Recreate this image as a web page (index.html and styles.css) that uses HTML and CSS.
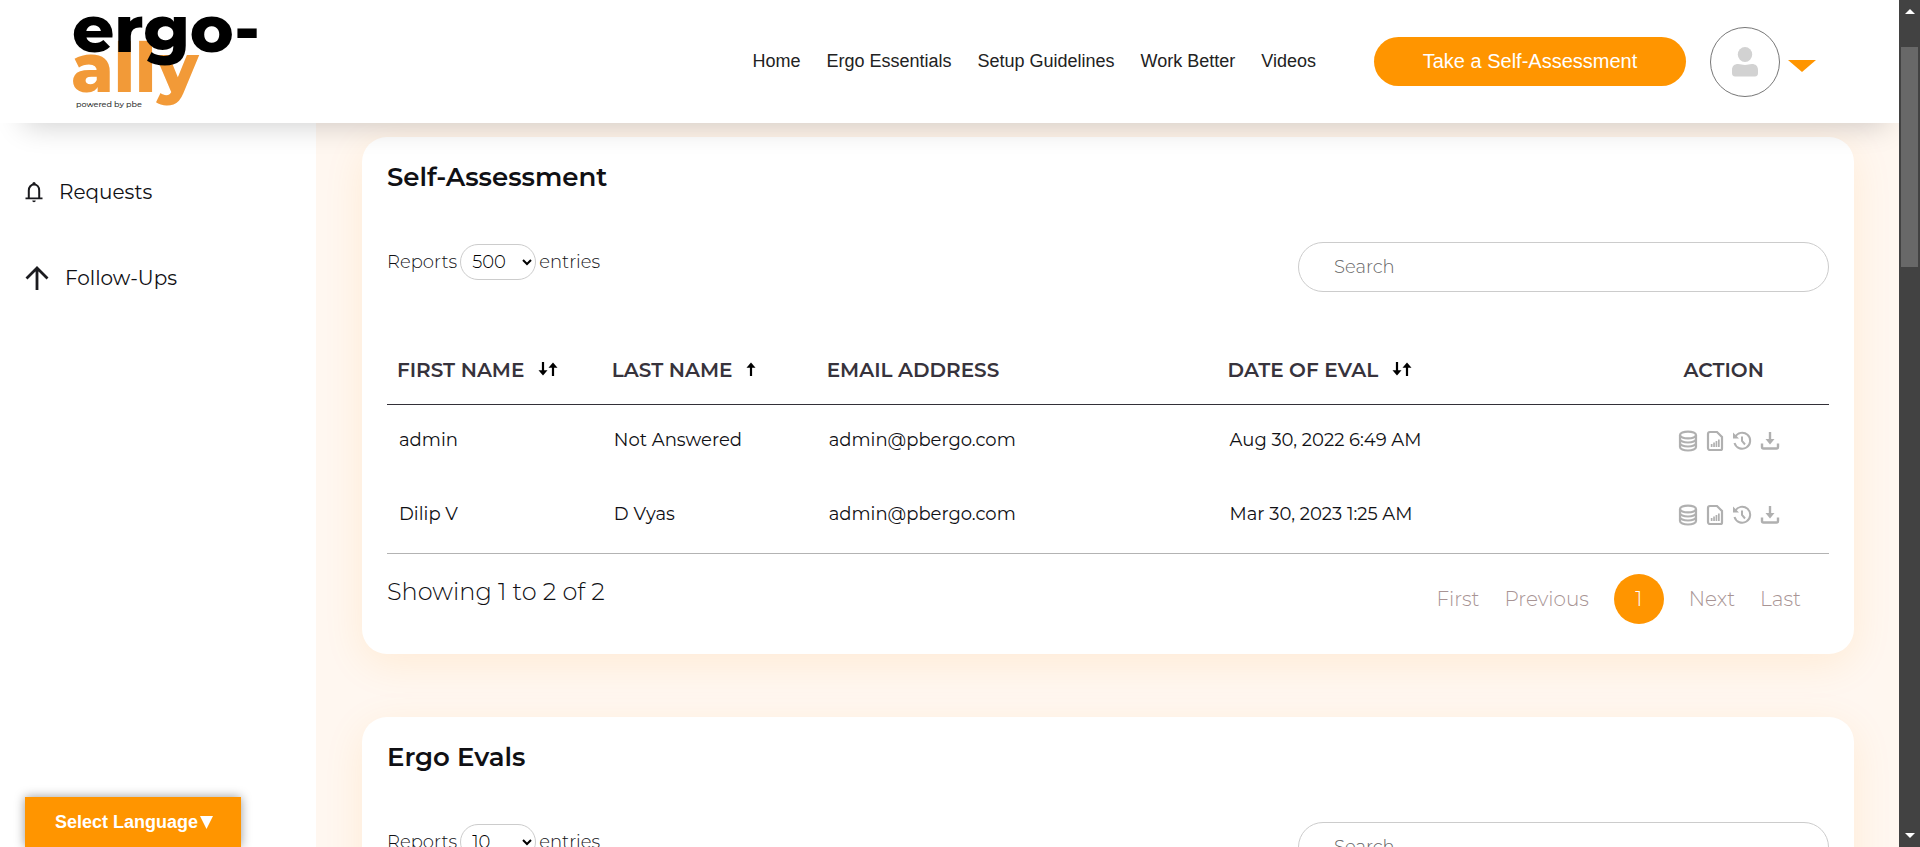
FILE: index.html
```html
<!DOCTYPE html>
<html lang="en">
<head>
<meta charset="utf-8">
<title>ergo-ally</title>
<link rel="stylesheet" href="styles.css">
</head>
<body>
<svg class="sprite" aria-hidden="true">
  <symbol id="sort" viewBox="0 0 20 16"><path d="M5 1v9M15 15V6" fill="none" stroke="#000" stroke-width="2.2"/><path d="M0.5 9.2h9L5 14.6zM10.500 6.800h9L15 1.400z" fill="#000"/></symbol>
  <symbol id="up" viewBox="0 0 10 16"><path d="M5 15V6" fill="none" stroke="#000" stroke-width="2.2"/><path d="M.5 6.800h9L5 1.400z" fill="#000"/></symbol>
  <symbol id="database" viewBox="0 0 20 22"><g fill="none" stroke="currentColor" stroke-width="2.200"><ellipse cx="10" cy="5" rx="8" ry="3.400"/><path d="M2 5v12c0 2 3.500 3.500 8 3.500s8-1.500 8-3.500V5M2 9c0 2 3.500 3.500 8 3.500S18 11 18 9M2 13c0 2 3.500 3.500 8 3.500s8-1.500 8-3.500"/></g></symbol>
  <symbol id="report" viewBox="0 0 18 22"><path d="M4 2h7l5 5v11.500a1.500 1.500 0 0 1-1.500 1.500H4a2 2 0 0 1-2-2V4a2 2 0 0 1 2-2z" fill="none" stroke="currentColor" stroke-width="2.200"/><path d="M4.800 17v-3h1.700v3zM7.200 17v-4.500h1.700V17zM9.600 17v-6h1.700v6zM12 17V9.500h1.700V17z" fill="currentColor"/></symbol>
  <symbol id="history" viewBox="0 0 20 20"><path d="M3 6.200A8 8 0 1 1 2.500 12" fill="none" stroke="currentColor" stroke-width="2"/><path d="M1 1.500v6h6z" fill="currentColor"/><path d="M10 5.500V10l3 3.500" fill="none" stroke="currentColor" stroke-width="2"/></symbol>
  <symbol id="download" viewBox="0 0 20 20"><path d="M10 1v9" stroke="currentColor" stroke-width="2.400"/><path d="M5.500 8h9L10 13.500z" fill="currentColor"/><path d="M2 12.500v3.500a1.500 1.500 0 0 0 1.500 1.500h13A1.500 1.500 0 0 0 18 16v-3.500" fill="none" stroke="currentColor" stroke-width="2.400"/></symbol>
</svg>
<div class="window">
  <div class="page">
    <header class="topbar">
      <a class="logo" href="#" aria-label="ergo-ally home">
        <svg width="200" height="112" viewBox="0 0 200 112">
          <text class="logo-ally" x="-1" y="86">ally</text>
          <text class="logo-ergo" x="0" y="46">ergo-</text>
          <text class="logo-tag" x="4" y="101">powered by pbe</text>
        </svg>
      </a>
      <nav class="nav">
        <a href="#">Home</a>
        <a href="#">Ergo Essentials</a>
        <a href="#">Setup Guidelines</a>
        <a href="#">Work Better</a>
        <a href="#">Videos</a>
      </nav>
      <button class="cta" type="button">Take a Self-Assessment</button>
      <button class="account" type="button" aria-label="Account">
        <span class="avatar">
          <svg width="26" height="30" viewBox="0 0 26 30"><ellipse cx="13" cy="7.500" rx="7.200" ry="7.500" fill="#d2d2d2"/><path d="M0 26v-3c0-4 2.500-6 6-6 3 0 4 1 7 1s4-1 7-1c3.500 0 6 2 6 6v3c0 2-1 3.500-3 3.500H3c-2 0-3-1.500-3-3.500z" fill="#d2d2d2"/></svg>
        </span>
        <svg class="caret" width="28" height="12" viewBox="0 0 28 12"><path d="M0 0h28L14 12z" fill="#ff9500"/></svg>
      </button>
    </header>
    <div class="content">
      <aside class="sidebar">
        <a href="#" class="side-link">
          <svg width="18" height="22" viewBox="0 0 18 22"><path d="M3.800 17V9.500C3.800 6 6 3.600 9 3.600s5.200 2.400 5.200 5.900V17" fill="none" stroke="#1b1b1f" stroke-width="2"/><path d="M.5 16.500h17v1.800H.5zM7.300 19.600h3.400c0 1-.7 1.700-1.700 1.700s-1.700-.7-1.700-1.700z" fill="#1b1b1f"/><circle cx="9" cy="2.500" r="1.600" fill="#1b1b1f"/></svg>
          Requests
        </a>
        <a href="#" class="side-link">
          <svg width="24" height="24" viewBox="0 0 24 24"><path d="M12 24V3M1.500 12.500L12 2l10.500 10.500" fill="none" stroke="#1b1b1f" stroke-width="2.800"/></svg>
          Follow-Ups
        </a>
      </aside>
      <main class="main">
        <section class="card">
          <h2>Self-Assessment</h2>
          <div class="tools">
            <label class="entries">Reports
              <select><option>500</option><option>10</option></select>
              entries</label>
            <input class="search" type="search" placeholder="Search" aria-label="Search self-assessments">
          </div>
          <table class="grid">
            <colgroup><col class="c-first"><col class="c-last"><col class="c-mail"><col class="c-date"><col class="c-action"></colgroup>
            <thead>
              <tr>
                <th>FIRST NAME <svg class="sort" width="20" height="16"><use href="#sort"/></svg></th>
                <th>LAST NAME <svg class="sort" width="10" height="16"><use href="#up"/></svg></th>
                <th>EMAIL ADDRESS</th>
                <th>DATE OF EVAL <svg class="sort" width="20" height="16"><use href="#sort"/></svg></th>
                <th class="action">ACTION</th>
              </tr>
            </thead>
            <tbody>
              <tr>
                <td>admin</td><td>Not Answered</td><td>admin@pbergo.com</td><td>Aug 30, 2022 6:49 AM</td>
                <td class="actions"><div class="icons">
                  <button type="button" aria-label="Data"><svg width="20" height="22"><use href="#database"/></svg></button>
                  <button type="button" aria-label="Report"><svg width="18" height="22"><use href="#report"/></svg></button>
                  <button type="button" aria-label="History"><svg width="20" height="20"><use href="#history"/></svg></button>
                  <button type="button" aria-label="Download"><svg width="20" height="20"><use href="#download"/></svg></button>
                </div></td>
              </tr>
              <tr>
                <td>Dilip V</td><td>D Vyas</td><td>admin@pbergo.com</td><td>Mar 30, 2023 1:25 AM</td>
                <td class="actions"><div class="icons">
                  <button type="button" aria-label="Data"><svg width="20" height="22"><use href="#database"/></svg></button>
                  <button type="button" aria-label="Report"><svg width="18" height="22"><use href="#report"/></svg></button>
                  <button type="button" aria-label="History"><svg width="20" height="20"><use href="#history"/></svg></button>
                  <button type="button" aria-label="Download"><svg width="20" height="20"><use href="#download"/></svg></button>
                </div></td>
              </tr>
            </tbody>
          </table>
          <div class="foot">
            <p class="showing">Showing 1 to 2 of 2</p>
            <nav class="pager" aria-label="Pages">
              <a href="#">First</a>
              <a href="#">Previous</a>
              <a href="#" class="current">1</a>
              <a href="#">Next</a>
              <a href="#">Last</a>
            </nav>
          </div>
        </section>
        <section class="card">
          <h2>Ergo Evals</h2>
          <div class="tools">
            <label class="entries">Reports
              <select><option>10</option><option>500</option></select>
              entries</label>
            <input class="search" type="search" placeholder="Search" aria-label="Search ergo evals">
          </div>
        </section>
      </main>
    </div>
    <button class="language" type="button"><span>Select Language</span><svg width="13" height="13" viewBox="0 0 13 13"><path d="M0 0h13L6.500 13z" fill="#fff"/></svg></button>
  </div>
  <div class="scrollbar" aria-hidden="true">
    <svg width="10" height="5" viewBox="0 0 10 5"><path d="M0 5h10L5 0z" fill="#fff"/></svg>
    <div class="track"><div class="thumb"></div></div>
    <svg width="10" height="5" viewBox="0 0 10 5"><path d="M0 0h10L5 5z" fill="#fff"/></svg>
  </div>
</div>
</body>
</html>
```

FILE: styles.css
```css
* { box-sizing: border-box; }
body {
  margin: 0;
  font-family: Montserrat, Inter, "Open Sans", sans-serif;
  font-size: 18px;
  color: #101014;
  background: #fff;
}
a { color: inherit; text-decoration: none; }
button { font: inherit; color: inherit; border: 0; padding: 0; background: none; cursor: pointer; }
svg { display: block; flex: none; }
.sprite { display: none; }

.window { display: flex; height: 100vh; overflow: hidden; }
.page { flex: 1; min-width: 0; display: flex; flex-direction: column; position: relative; overflow: hidden; }

.topbar {
  position: relative;
  z-index: 2;
  flex: none;
  display: flex;
  align-items: center;
  height: 123px;
  padding: 0 83px 0 72px;
  background: #fff;
  box-shadow: 6px 20px 28px -18px rgba(0, 0, 0, 0.2);
  font-family: "Liberation Sans", Arial, sans-serif;
}
.logo svg { overflow: visible; }
.logo text { font-family: Montserrat, Inter, sans-serif; }
.logo .logo-ergo { font-size: 66px; font-weight: 800; fill: #000; }
.logo .logo-ally { font-size: 68px; font-weight: 800; fill: #f29a38; }
.logo .logo-tag { font-size: 8px; font-weight: 500; fill: #333; }
.nav { display: flex; gap: 26px; margin-left: auto; font-size: 18px; color: #222; }
.cta {
  width: 312px;
  height: 49px;
  margin-left: 58px;
  border-radius: 25px;
  background: #ff9500;
  color: #fff;
  font-size: 20px;
}
.account { display: flex; align-items: center; gap: 8px; margin-left: 24px; }
.avatar {
  display: flex;
  align-items: center;
  justify-content: center;
  width: 70px;
  height: 70px;
  border: 1px solid #777;
  border-radius: 50%;
}
.caret { margin-top: 8px; }

.content { flex: 1; display: flex; min-height: 0; }
.sidebar {
  flex: none;
  width: 316px;
  padding: 55px 25px;
  display: flex;
  flex-direction: column;
  gap: 58px;
  font-size: 20px;
  line-height: 28px;
  background: #fff;
}
.side-link { display: flex; align-items: center; gap: 16px; }
.main { flex: 1; min-width: 0; padding: 14px 45px 0 46px; background: #fff7f0; overflow: hidden; }
.card {
  margin-bottom: 63px;
  padding: 24px 25px 30px;
  border-radius: 25px;
  background: #fff;
  box-shadow: 0 10px 40px rgba(255, 149, 0, 0.11);
}
.card h2 { margin: 0; font-size: 26px; line-height: 32px; font-weight: 600; }
.tools { display: flex; justify-content: space-between; align-items: flex-start; margin-top: 49px; }
.entries { display: flex; align-items: center; gap: 3px; height: 40px; font-weight: 300; }
.entries select {
  width: 76px;
  height: 36px;
  padding: 0 0 0 7px;
  border: 1px solid #ccc;
  border-radius: 18px;
  background: #fff;
  color: #000;
  font: inherit;
}
.search {
  width: 531px;
  height: 50px;
  padding: 0 35px;
  border: 1px solid #ccc;
  border-radius: 25px;
  background: #fff;
  font: inherit;
  font-weight: 300;
}
.search::placeholder { color: #666; opacity: 1; }

.grid { width: 100%; margin-top: 43px; border-collapse: separate; border-spacing: 0; table-layout: fixed; }
.c-first, .c-last { width: 14.9%; }
.c-mail, .c-date { width: 27.8%; }
.c-action { width: 14.6%; }
.grid th {
  height: 70px;
  padding: 0 10px;
  border-bottom: 1px solid #333038;
  text-align: left;
  font-size: 20px;
  font-weight: 600;
  color: #37333c;
  white-space: nowrap;
}
.grid .action { text-align: center; }
.sort { display: inline-block; margin-left: 8px; }
.grid td { height: 74px; padding: 0 12px 4px; }
.grid tbody tr:last-child td { height: 75px; border-bottom: 1px solid #b3b3b3; }
.grid .actions { padding: 0 12px 2px 22px; }
.icons { display: flex; align-items: center; justify-content: center; gap: 8px; color: #b0b0b0; }

.foot { display: flex; justify-content: space-between; align-items: flex-start; padding-top: 20px; }
.showing { margin: 0; padding-top: 3px; font-size: 24px; line-height: 30px; font-weight: 300; }
.pager { display: flex; align-items: center; gap: 25px; padding-right: 28px; font-size: 20px; font-weight: 300; color: #a89494; }
.pager .current {
  width: 50px;
  height: 50px;
  border-radius: 50%;
  background: #ff9500;
  color: #fff;
  line-height: 50px;
  text-align: center;
}

.language {
  position: absolute;
  left: 25px;
  bottom: 0;
  z-index: 3;
  display: flex;
  align-items: center;
  gap: 2px;
  width: 216px;
  height: 50px;
  padding-left: 30px;
  background: #ff9500;
  box-shadow: 0 0 10px rgba(0, 0, 0, 0.4);
  color: #fff;
  font-family: "Liberation Sans", Arial, sans-serif;
  font-size: 18px;
  font-weight: 700;
}

.scrollbar {
  flex: none;
  display: flex;
  flex-direction: column;
  align-items: center;
  width: 21px;
  padding: 9px 2px;
  background: #424242;
}
.track { flex: 1; width: 100%; padding-top: 33px; }
.thumb { height: 28%; background: #686868; }
```
